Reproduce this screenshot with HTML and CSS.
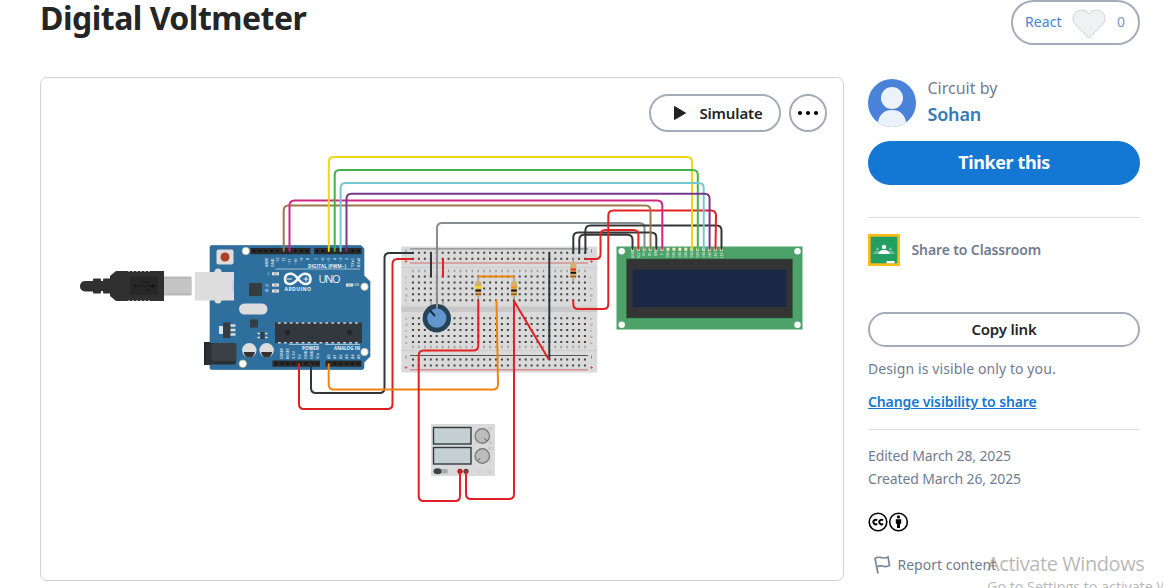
FILE: index.html
```html
<!DOCTYPE html>
<html lang="en">
<head>
<meta charset="utf-8">
<title>Digital Voltmeter</title>
<link rel="stylesheet" href="styles.css">
</head>
<body>
<header class="page-header">
  <h1 class="title">Digital Voltmeter</h1>
  <button class="react"><span class="react-label">React</span>
    <svg class="heart" viewBox="0 0 34 30" width="34" height="30"><path d="M17 29 3.200 15.200C.2 12 .2 6.500 3.500 3.500 7.500 0 13.500.5 17 4.800 20.500.5 26.500 0 30.500 3.500 33.800 6.500 33.800 12 30.800 15.200Z" fill="#f0f1f3" stroke="#cfd2d6"/></svg>
    <span class="react-count">0</span></button>
</header>
<main class="layout">
  <section class="preview">
    <svg class="circuit" viewBox="41 78 802 502" width="802" height="502">
      <!-- USB cable -->
      <g fill="#303030">
        <rect x="80" y="281" width="20" height="10.500" rx="5"/>
        <rect x="93" y="278.500" width="8" height="15" rx="1"/><rect x="99" y="281" width="8" height="10"/><rect x="103" y="278.500" width="8" height="15" rx="1"/>
        <path d="M110 276l6-5h48v30h-48l-6-5z"/>
      </g>
      <path d="M128 271h23M128 301h23" stroke="#fff" stroke-dasharray="2 2"/>
      <rect x="130" y="276.500" width="28" height="18.500" fill="#272727"/>
      <g stroke="#171717" fill="#171717" stroke-width=".8"><path d="M135 286h19M139 286l4-4h4M143 286l4 4h2" fill="none"/><circle cx="135" cy="286" r="1"/><circle cx="153" cy="286" r="1.500"/><circle cx="148" cy="282" r=".6"/><circle cx="149" cy="290" r=".6"/></g>
      <rect x="164" y="276.500" width="27.500" height="19" fill="#b9b9b9"/><rect x="164" y="279" width="27.500" height="14" fill="#c5c5c5"/>
      <!-- Arduino Uno -->
      <path d="M211.500 245.500h149.500l3 3v27l6 6v75l-6 6v5.500l-1.500 1.500h-151q-1.500 0-1.500-1.500v-121q0-1.500 1.500-1.500z" fill="#2f6f9d" stroke="#28648f" stroke-width=".6"/>
      <g fill="#ddd"><rect x="216.500" y="249.500" width="17" height="15" rx="2"/><circle cx="218" cy="272" r="3.500"/><circle cx="218" cy="300" r="3.500"/><rect x="195" y="272" width="39" height="28.500"/><rect x="239" y="303.500" width="28.500" height="11" rx="5.500"/></g>
      <path d="M233 281v10" stroke="#c2c2c2"/>
      <circle cx="225" cy="257" r="4.500" fill="#ab4128"/>
      <g fill="#fff" stroke="#bdb889" stroke-width=".7"><circle cx="245.800" cy="251" r="3.700"/><circle cx="364.500" cy="286.700" r="3.700"/><circle cx="364.500" cy="352" r="3.700"/><circle cx="242.800" cy="363.700" r="3.700"/></g>
      <g fill="#2a2a2a"><rect x="250.500" y="248" width="60" height="6.200"/><rect x="314" y="248" width="47.500" height="6.200"/><rect x="272.500" y="360.500" width="47.500" height="6.200"/><rect x="325.500" y="360.500" width="36" height="6.200"/></g>
      <g stroke="#0c0c0c" stroke-width="2" stroke-dasharray="2 3.930"><path d="M252.800 251H310M316 251H361M275 363.600H320M327.700 363.600H361"/></g>
      <g fill="#353c42"><rect x="249" y="283" width="13" height="13"/><rect x="250" y="319.500" width="8" height="8"/><rect x="223" y="322.500" width="7.500" height="15.500"/><rect x="260.500" y="332" width="4" height="7"/></g>
      <path d="M219 330h4" stroke="#dde2e5" stroke-width="8"/>
      <g stroke="#d6dde1" stroke-width="2.400"><path d="M230.500 325.500h5M230.500 330h5M230.500 334.500h5"/><path d="M257.500 333.500h2.500M257.500 337.500h2.500M265 333.500h2.500M265 337.500h2.500" stroke-width="1.500"/></g>
      <rect x="204" y="342" width="6" height="23" fill="#23282c"/><rect x="206" y="343" width="30" height="21.500" rx="2" fill="#2a3034"/><rect x="211.500" y="343" width="25" height="18" rx="3" fill="#3a4044"/>
      <g fill="#ddd"><circle cx="249.300" cy="350.300" r="7.200"/><circle cx="266.600" cy="350.300" r="7.200"/></g>
      <path d="M243.800 352h11a5.500 5.500 0 0 1-11 0zM261.100 352h11a5.500 5.500 0 0 1-11 0z" fill="#333"/>
      <rect x="275" y="322.500" width="87" height="20.500" fill="#32383d"/>
      <path d="M278 323H361M278 342.700H361" stroke="#cdd4d8" stroke-width="1.600" stroke-dasharray="2.700 3.230"/>
      <circle cx="287.500" cy="332.500" r="2.800" fill="#20262a"/><circle cx="349.500" cy="332.500" r="2.800" fill="#20262a"/>
      <g fill="none" stroke="#f4f7f9" stroke-width="2.600"><path d="M298 278.700C295 274.500 292 273.300 289.500 273.800 283.500 274.500 283.500 283.500 289.500 284 293 284.200 295.500 282 298 278.700 300.500 275 303 273.500 306 273.800 312 274.500 312 283.500 306 284 303 284.200 300.500 282 298 278.700Z"/><path d="M287 279h5M303.500 279h5M306 276.500v5" stroke-width="1"/></g>
      <g class="silk"><text x="284.500" y="291" font-size="5" font-weight="700" textLength="26.500">ARDUINO</text><text x="318.500" y="283" font-size="11" textLength="22">UNO</text><text x="308" y="267.600" font-size="4.600" font-weight="700" textLength="38">DIGITAL (PWM~)</text><text x="302" y="350" font-size="4.600" font-weight="700" textLength="17">POWER</text><text x="334" y="350" font-size="4.600" font-weight="700" textLength="26">ANALOG IN</text><text x="268" y="275" font-size="3">L</text><text x="265" y="286.500" font-size="3">TX</text><text x="265" y="292" font-size="3">RX</text><text x="353.500" y="286" font-size="3.500">ON</text></g>
      <path d="M275.500 269H360M289 344.500H319M325 344.500H360" stroke="#d5e0e8" stroke-width=".7"/>
      <path d="M272 273.700h7M272 285h7M272 291h7M346 285h7" stroke="#e2e2e2" stroke-width="3"/><path d="M274 273.700h3M274 285h3M274 291h3M348 285h3" stroke="#b8beb8" stroke-width="3"/>
      <g class="pins"><text transform="translate(267.500 267)rotate(-90)">AREF</text><text transform="translate(273.500 267)rotate(-90)">GND</text><text transform="translate(279.400 262)rotate(-90)">13</text><text transform="translate(285.300 262)rotate(-90)">12</text><text transform="translate(291.200 265)rotate(-90)">~11</text><text transform="translate(297.200 265)rotate(-90)">~10</text><text transform="translate(303 262)rotate(-90)">~9</text><text transform="translate(309 260)rotate(-90)">8</text><text transform="translate(318 260)rotate(-90)">7</text><text transform="translate(324 262)rotate(-90)">~6</text><text transform="translate(330 262)rotate(-90)">~5</text><text transform="translate(336 260)rotate(-90)">4</text><text transform="translate(342 262)rotate(-90)">~3</text><text transform="translate(348 260)rotate(-90)">2</text><text transform="translate(354 267)rotate(-90)">TX▸1</text><text transform="translate(360 267)rotate(-90)">RX◂0</text>
      <text transform="translate(282.500 359)rotate(-90)">IOREF</text><text transform="translate(288.500 359)rotate(-90)">RESET</text><text transform="translate(294.500 359)rotate(-90)">3.3V</text><text transform="translate(300.500 359)rotate(-90)">5V</text><text transform="translate(306.500 359)rotate(-90)">GND</text><text transform="translate(312.500 359)rotate(-90)">GND</text><text transform="translate(318.500 359)rotate(-90)">Vin</text><text transform="translate(330 359)rotate(-90)">A0</text><text transform="translate(336 359)rotate(-90)">A1</text><text transform="translate(342 359)rotate(-90)">A2</text><text transform="translate(348 359)rotate(-90)">A3</text><text transform="translate(354 359)rotate(-90)">A4</text><text transform="translate(360 359)rotate(-90)">A5</text></g>
      <!-- Breadboard -->
      <rect x="401.300" y="246.500" width="196" height="126" fill="#dadada"/><rect x="401.300" y="306.500" width="196" height="5.500" fill="#c8c8c8"/>
      <path d="M401.500 267.500h195.500M401.500 350.500h195.500" stroke="#cecece"/>
      <path d="M410 248.800h178" stroke="#888" stroke-width="1.300"/><path d="M410 355.500h178" stroke="#555" stroke-width="1"/><path d="M410 263h178M410 369.800h178" stroke="#d56c6c" stroke-width="1"/>
      <path class="holes" d="M412 252.800H586M412 258.700H586M412 276.500H586M412 282.400H586M412 288.400H586M412 294.300H586M412 300.200H586M412 318.200H586M412 324.100H586M412 330H586M412 336H586M412 341.900H586M412 359.500H586M412 365.400H586"/>
      <path d="M412.300 271H586M412.300 347H586" stroke="#999" stroke-width="2.500" stroke-dasharray="1.400 4.530"/>
      <g class="board-label"><text x="405" y="278">j</text><text x="405" y="284">i</text><text x="405" y="290">h</text><text x="405" y="296">g</text><text x="405" y="302">f</text><text x="405" y="320">e</text><text x="405" y="326">d</text><text x="405" y="332">c</text><text x="405" y="338">b</text><text x="405" y="344">a</text><text x="590" y="278">j</text><text x="590" y="284">i</text><text x="590" y="290">h</text><text x="590" y="296">g</text><text x="590" y="302">f</text><text x="590" y="320">e</text><text x="590" y="326">d</text><text x="590" y="332">c</text><text x="590" y="338">b</text><text x="590" y="344">a</text></g>
      <path d="M406 249.500v3M591.500 249.500v3M406 355.500v3M591.500 355.500v3" stroke="#777" stroke-width=".8"/>
      <path d="M404.500 261.500h3m-1.500-1.500v3M590 261.500h3m-1.500-1.500v3M404.500 367.500h3m-1.500-1.500v3M590 367.500h3m-1.500-1.500v3" stroke="#df4545" stroke-width=".8"/>
      <!-- Potentiometer and resistors -->
      <path d="M431 301v7M437 301v7M443 301v7M478.300 277v22M514 277v22M573.300 258v24" stroke="#999" stroke-width="1.300"/>
      <circle cx="436.800" cy="318.200" r="14.200" fill="#264456"/><circle cx="436.800" cy="318.200" r="9.600" fill="#6197ce"/><path d="M435 316l-5-5.500" stroke="#16303f" stroke-width="2"/>
      <g fill="#d4b06f"><rect x="475.300" y="281" width="6" height="15.500" rx="2"/><rect x="511" y="281" width="6" height="15.500" rx="2"/><rect x="570.300" y="262.500" width="6" height="16" rx="2"/></g>
      <path d="M475.500 287.300h5.600" stroke="#f6e40a" stroke-width="2"/><path d="M511.200 287.300h5.600" stroke="#fa940c" stroke-width="2"/><path d="M570.500 269.500h5.600" stroke="#fa2815" stroke-width="2"/>
      <path d="M475.500 290.500h5.600M511.200 290.500h5.600M570.500 272.700h5.600" stroke="#171008" stroke-width="2"/><path d="M475.500 294.200h5.600M511.200 294.200h5.600M570.500 276.500h5.600" stroke="#9a5522" stroke-width="1.600"/>
      <!-- LCD 16x2 -->
      <rect x="616.500" y="246.500" width="186" height="83" fill="#4ca269"/><rect x="626.500" y="259" width="166" height="59" fill="#343434" stroke="#286442" stroke-width=".6"/><rect x="632.500" y="269.500" width="154" height="37.500" fill="#1b2845"/>
      <g fill="#fff"><circle cx="621.700" cy="251.300" r="3.200"/><circle cx="797.500" cy="251.300" r="3.200"/><circle cx="621.700" cy="324.800" r="3.200"/><circle cx="797.500" cy="324.800" r="3.200"/></g>
      <path d="M630.900 249.300H724" stroke="#f0ecc1" stroke-width="3" stroke-dasharray="3 2.930"/>
      <g class="lcd-label"><text transform="translate(633.500 258)rotate(-90)">GND</text><text transform="translate(639.500 258)rotate(-90)">VCC</text><text transform="translate(645.400 256)rotate(-90)">V0</text><text transform="translate(651.300 256)rotate(-90)">RS</text><text transform="translate(657.300 256)rotate(-90)">RW</text><text transform="translate(663.200 255)rotate(-90)">E</text><text transform="translate(669.100 257.500)rotate(-90)">DB0</text><text transform="translate(675 257.500)rotate(-90)">DB1</text><text transform="translate(681 257.500)rotate(-90)">DB2</text><text transform="translate(686.900 257.500)rotate(-90)">DB3</text><text transform="translate(692.800 257.500)rotate(-90)">DB4</text><text transform="translate(698.800 257.500)rotate(-90)">DB5</text><text transform="translate(704.700 257.500)rotate(-90)">DB6</text><text transform="translate(710.600 257.500)rotate(-90)">DB7</text><text transform="translate(716.500 258)rotate(-90)">LED</text><text transform="translate(722.500 258)rotate(-90)">LED</text></g>
      <!-- Power supply -->
      <rect x="431" y="424" width="64" height="52" fill="#dadada"/><g fill="#c5d0d3" stroke="#303b40" stroke-width="1.400"><rect x="433.500" y="427.500" width="37.500" height="16.500"/><rect x="433.500" y="447.500" width="37.500" height="16.500"/></g>
      <g fill="#bcbcbc" stroke="#7d7d7d" stroke-width="1.400"><circle cx="482.300" cy="436" r="7.200"/><circle cx="482.300" cy="456" r="7.200"/></g><path d="M484 438l3 3M480 458l-2 3" stroke="#666"/>
      <rect x="437" y="469" width="11" height="4.500" rx="2.200" fill="#aaa"/><ellipse cx="437.500" cy="471.300" rx="4" ry="3" fill="#3b4345"/><circle cx="460" cy="471.300" r="2.600" fill="#a9191d"/><circle cx="466" cy="471.300" r="2.600" fill="#474747"/>
      <g class="supply-label"><text x="488.500" y="429.500">5.0</text><text x="489" y="444">30</text><text x="488" y="449.500">30.0</text><text x="475" y="444">0</text><text x="489.500" y="463">5</text><text x="479" y="472.500">V</text><text x="489" y="472.500">A</text></g>
      <!-- Wires -->
      <g class="wires">
        <path stroke="#858d91" d="M437 308V228q0-5 5-5H639.500q5 0 5 5V249"/>
        <path stroke="#333638" d="M413 253H389.500q-5 0-5 5V388q0 5-5 5H316q-5 0-5-5V364"/>
        <path stroke="#db2025" d="M413 259H397.500q-5 0-5 5V404q0 5-5 5H304q-5 0-5-5V364"/>
        <path stroke="#ee8411" d="M328.700 364V384.500q0 5 5 5H493q5 0 5-5L496.500 300.500M478.300 276.500H514"/>
        <path stroke="#333638" d="M431 253V276.500M549.300 253V359"/>
        <path stroke="#e32125" d="M443 259V276.500M514 301L548.500 359"/>
        <path stroke="#e32125" d="M478.300 301V345.500q0 5-5 5H423.700q-5 0-5 5V496q0 5 5 5H455q5 0 5-5V471M514 301V494q0 5-5 5H471q-5 0-5-5V471"/>
        <path stroke="#333638" d="M573.300 253V237.500q0-5 5-5H651.300q5 0 5 5V249M579.300 253V239.700q0-5 5-5H627.500q5 0 5 5V249M585.400 253V230.500q0-5 5-5H716.500q5 0 5 5V249"/>
        <path stroke="#e32125" d="M585.400 259H595.500q5 0 5-5V235q0-5 5-5H633.400q5 0 5 5V249M573.300 300.500V304q0 5 5 5H603.300q5 0 5-5V215.500q0-5 5-5H711q5 0 5 5L715.500 249"/>
        <path stroke="#9b7650" d="M283.700 251V210.500q0-5 5-5H645.500q5 0 5 5V249"/><path stroke="#cf2783" d="M289.500 251V205.500q0-5 5-5H657.300q5 0 5 5V249"/>
        <path stroke="#f3d514" d="M328.800 251V162q0-5 5-5H687q5 0 5 5V249"/><path stroke="#43b248" d="M334.700 251V175q0-5 5-5H692.800q5 0 5 5V249"/><path stroke="#75c7d3" d="M340.600 251V188q0-5 5-5H698.700q5 0 5 5V249"/><path stroke="#76388e" d="M346.500 251V198.700q0-5 5-5H704.600q5 0 5 5V249"/>
      </g>
    </svg>
    <div class="actions"><button class="simulate"><svg width="14" height="18" viewBox="0 0 14 18"><path d="M1.500 2.500 12.500 9 1.500 15.500Z" fill="#222" stroke="#222" stroke-linejoin="round"/></svg><span class="simulate-text">Simulate</span></button><button class="more" aria-label="More"><svg width="22" height="6" viewBox="0 0 22 6"><circle cx="3" cy="3" r="2.100"/><circle cx="11" cy="3" r="2.100"/><circle cx="19" cy="3" r="2.100"/></svg></button></div>
  </section>
  <aside class="sidebar">
    <div class="author"><svg width="48" height="48" viewBox="0 0 48 48"><clipPath id="face"><circle cx="24" cy="24" r="24"/></clipPath><g clip-path="url(#face)"><path fill="#4a82d9" d="M0 0h48v48H0z"/><circle cx="24" cy="19" r="11" fill="#ebf2fb"/><path d="M9.500 48C9.500 37 15 31 24 31s14.500 6 14.500 17z" fill="#ebf2fb"/></g></svg>
      <div class="author-text"><span class="byline">Circuit by</span><a class="name">Sohan</a></div></div>
    <button class="tinker"><span>Tinker this</span></button>
    <div class="classroom"><svg width="32" height="32" viewBox="0 0 32 32"><path fill="#fbbc16" d="M0 0h32v32H0z"/><path fill="#239f62" d="M2.700 2.700h26.600v26.600H2.700z"/><g fill="#6bc096"><circle cx="9.500" cy="15" r="1.600"/><circle cx="22.500" cy="15" r="1.600"/><path d="M5 20c0-2 2-3 4.500-3s4 1 4.500 3zM18 20c.5-2 2-3 4.500-3s4.500 1 4.500 3z"/></g><g fill="#fff"><circle cx="16" cy="13" r="2.200"/><path d="M10.500 20c0-3 2.500-4 5.500-4s5.500 1 5.500 4z"/><path d="M18.500 27h8v2.300h-8z"/></g></svg><span class="classroom-text">Share to Classroom</span></div>
    <button class="copy"><span>Copy link</span></button>
    <p class="visibility">Design is visible only to you.</p>
    <a class="change">Change visibility to share</a>
    <div class="dates"><p class="edited">Edited March 28, 2025</p><p class="created">Created March 26, 2025</p></div>
    <div class="license"><svg width="41" height="20" viewBox="0 0 41 20"><g fill="none" stroke="#000" stroke-width="1.600"><circle cx="10" cy="10" r="8.800"/><circle cx="30.500" cy="10" r="8.800"/><path stroke-width="1.900" d="M9.200 8.300a2.300 2.300 0 1 0 0 3.500M15.100 8.300a2.300 2.300 0 1 0 0 3.500"/></g><circle cx="30.500" cy="4.900" r="1.600"/><path d="M27.800 7.200h5.400v4.600h-1.200V16h-3v-4.200h-1.200z"/></svg></div>
    <div class="report"><svg width="18" height="20" viewBox="0 0 18 20"><path d="M5 18.500 2 3.500c3-2 5-1.300 7-.8s4 .5 6-.8l1.500 8.700c-3 1.600-4.500 1.100-6.500.6s-4-.5-6.500 1" fill="none" stroke="#78859c" stroke-width="1.700"/></svg><span class="report-text">Report content</span></div>
  </aside>
</main>
<div class="watermark"><div class="wm-title">Activate Windows</div><div class="wm-sub">Go to Settings to activate Windows.</div></div>
</body>
</html>
```
FILE: styles.css
```css
* { box-sizing: border-box; }
body { margin: 0; height: 588px; overflow: hidden; position: relative; background: #fff; font-family: "Noto Sans", sans-serif; color: #717c90; }
button { margin: 0; padding: 0; background: #fff; border: 2px solid #a3adba; border-radius: 30px; display: flex; align-items: center; justify-content: center; font-family: inherit; color: #252525; }
p, h1 { margin: 0; }
svg { flex: none; }
.page-header { height: 77px; padding: 0 24px 0 40px; display: flex; justify-content: space-between; align-items: flex-start; }
.title { font-size: 32px; line-height: 35px; font-weight: 700; letter-spacing: -.5px; color: #252525; white-space: nowrap; }
.react { width: 129px; height: 45px; padding: 0 13px 0 12px; font-size: 14px; line-height: 20px; justify-content: space-between; }
.react span { margin-top: -2px; }
.react-label { color: #4783d8; letter-spacing: .1px; }
.react-count { color: #7799bf; }
.heart { margin-top: 3px; }
.layout { display: grid; grid-template-columns: 804px 272px; gap: 24px; padding-left: 40px; }
.preview { height: 504px; border: 1px solid #d0d2d6; border-radius: 7px; position: relative; }
.circuit { display: block; }
.actions { position: absolute; top: 16px; right: 16px; display: flex; gap: 8px; }
.simulate { width: 132px; height: 38px; gap: 12px; font-size: 15px; font-weight: 600; letter-spacing: -.15px; padding-left: 6px; }
.more { width: 38px; height: 38px; }
.wires { fill: none; stroke-width: 2; stroke-linecap: round; }
.holes { stroke: #444; stroke-width: 2; stroke-dasharray: 2 3.930; fill: none; }
.silk { fill: #edf3f6; font-family: "Open Sans", sans-serif; }
.pins { fill: #c5d6e1; font: 700 3.800px "Open Sans", sans-serif; }
.board-label { fill: #888; font: 4px "Noto Sans", sans-serif; }
.supply-label { fill: #aaa; font: 2.800px "Noto Sans", sans-serif; }
.lcd-label { fill: #b9dbc3; font: 700 3.100px "Noto Sans", sans-serif; }
.sidebar { width: 272px; display: flex; flex-direction: column; white-space: nowrap; }
.author { height: 64px; padding-top: 2px; display: flex; gap: 11.500px; }
.author-text { display: flex; flex-direction: column; line-height: 26px; margin-top: -4px; }
.byline { font-size: 16px; }
.name { font-size: 18px; font-weight: 600; letter-spacing: -.2px; color: #347ab8; }
.tinker { height: 44px; border: 0; background: #1477d4; color: #fff; font-size: 18px; font-weight: 700; letter-spacing: -.4px; padding-bottom: 2px; }
.classroom { margin-top: 32px; border-top: 1px solid #d9dce0; padding-top: 16px; height: 95px; display: flex; gap: 11.500px; font-size: 14px; font-weight: 600; letter-spacing: -.12px; line-height: 32px; }
.copy { height: 35px; font-size: 15px; font-weight: 600; letter-spacing: -.2px; padding-bottom: 2px; }
.visibility { margin-top: 11px; height: 22px; line-height: 22px; font-size: 14px; letter-spacing: .1px; }
.change { margin-top: 11px; height: 22px; line-height: 22px; font-size: 14px; font-weight: 600; letter-spacing: -.12px; color: #1477d4; text-decoration: underline; align-self: flex-start; }
.dates { margin-top: 16px; border-top: 1px solid #d9dce0; padding-top: 14px; font-size: 14px; letter-spacing: -.13px; line-height: 23px; }
.license { height: 20px; margin-top: 22px; }
.report { margin-top: 23px; padding-left: 5px; display: flex; align-items: center; gap: 6.500px; font-size: 14px; line-height: 20px; }
.watermark { position: absolute; left: 987px; top: 550px; width: 176px; overflow: hidden; white-space: nowrap; color: rgba(112, 112, 112, .5); font-family: "Open Sans", sans-serif; }
.wm-title { font-size: 20px; letter-spacing: -.42px; line-height: 27px; }
.wm-sub { font-size: 14.500px; line-height: 19px; letter-spacing: -.1px; }
```
